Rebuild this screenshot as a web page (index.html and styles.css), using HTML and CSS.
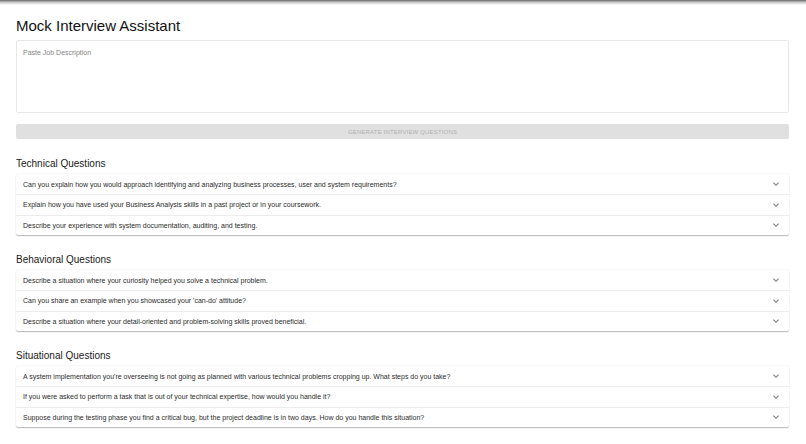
FILE: index.html
```html
<!DOCTYPE html>
<html lang="en">
<head>
<meta charset="utf-8">
<title>Mock Interview Assistant</title>
<link rel="stylesheet" href="styles.css">
</head>
<body>
<div class="topbar"></div>
<main class="page">
  <h1 class="title">Mock Interview Assistant</h1>
  <textarea class="jd" placeholder="Paste Job Description"></textarea>
  <button class="generate" disabled>Generate Interview Questions</button>

  <section class="qsection">
    <h2 class="qheading">Technical Questions</h2>
    <div class="accordion">
      <div class="row"><span class="qtext">Can you explain how you would approach identifying and analyzing business processes, user and system requirements?</span><svg class="chev" viewBox="0 0 24 24"><path d="M16.59 8.59 12 13.17 7.41 8.59 6 10l6 6 6-6z"/></svg></div>
      <div class="row"><span class="qtext">Explain how you have used your Business Analysis skills in a past project or in your coursework.</span><svg class="chev" viewBox="0 0 24 24"><path d="M16.59 8.59 12 13.17 7.41 8.59 6 10l6 6 6-6z"/></svg></div>
      <div class="row"><span class="qtext">Describe your experience with system documentation, auditing, and testing.</span><svg class="chev" viewBox="0 0 24 24"><path d="M16.59 8.59 12 13.17 7.41 8.59 6 10l6 6 6-6z"/></svg></div>
    </div>
  </section>

  <section class="qsection">
    <h2 class="qheading">Behavioral Questions</h2>
    <div class="accordion">
      <div class="row"><span class="qtext">Describe a situation where your curiosity helped you solve a technical problem.</span><svg class="chev" viewBox="0 0 24 24"><path d="M16.59 8.59 12 13.17 7.41 8.59 6 10l6 6 6-6z"/></svg></div>
      <div class="row"><span class="qtext">Can you share an example when you showcased your 'can-do' attitude?</span><svg class="chev" viewBox="0 0 24 24"><path d="M16.59 8.59 12 13.17 7.41 8.59 6 10l6 6 6-6z"/></svg></div>
      <div class="row"><span class="qtext">Describe a situation where your detail-oriented and problem-solving skills proved beneficial.</span><svg class="chev" viewBox="0 0 24 24"><path d="M16.59 8.59 12 13.17 7.41 8.59 6 10l6 6 6-6z"/></svg></div>
    </div>
  </section>

  <section class="qsection">
    <h2 class="qheading">Situational Questions</h2>
    <div class="accordion">
      <div class="row"><span class="qtext">A system implementation you're overseeing is not going as planned with various technical problems cropping up. What steps do you take?</span><svg class="chev" viewBox="0 0 24 24"><path d="M16.59 8.59 12 13.17 7.41 8.59 6 10l6 6 6-6z"/></svg></div>
      <div class="row"><span class="qtext">If you were asked to perform a task that is out of your technical expertise, how would you handle it?</span><svg class="chev" viewBox="0 0 24 24"><path d="M16.59 8.59 12 13.17 7.41 8.59 6 10l6 6 6-6z"/></svg></div>
      <div class="row"><span class="qtext">Suppose during the testing phase you find a critical bug, but the project deadline is in two days. How do you handle this situation?</span><svg class="chev" viewBox="0 0 24 24"><path d="M16.59 8.59 12 13.17 7.41 8.59 6 10l6 6 6-6z"/></svg></div>
    </div>
  </section>
</main>
</body>
</html>
```

FILE: styles.css
```css
* { box-sizing: border-box; }

html, body {
  margin: 0;
  padding: 0;
  background: #ffffff;
  font-family: "Liberation Sans", Arial, Helvetica, sans-serif;
  color: rgba(0, 0, 0, 0.87);
}

.topbar {
  height: 5px;
  background: linear-gradient(to bottom, rgba(0,0,0,0.6), rgba(0,0,0,0.22) 45%, rgba(0,0,0,0));
}

.page {
  padding: 0 17px 20px 16px;
  display: flex;
  flex-direction: column;
}

.title {
  margin: 11px 0 0 0;
  font-size: 15px;
  line-height: 20px;
  font-weight: 400;
  color: #111;
}

.jd {
  display: block;
  margin-top: 4px;
  width: 100%;
  height: 73px;
  border: 1px solid #e8e8e8;
  border-radius: 2px;
  padding: 6.5px 6px;
  font-family: "Liberation Sans", Arial, sans-serif;
  font-size: 7px;
  line-height: 9px;
  color: #333;
  resize: none;
  outline: none;
  background: #fff;
}

.jd::placeholder {
  color: #858585;
  opacity: 1;
}

.generate {
  margin-top: 11px;
  width: 100%;
  height: 15px;
  border: none;
  border-radius: 2px;
  background: #e0e0e0;
  color: #b2b2b2;
  font-family: "Liberation Sans", Arial, sans-serif;
  font-size: 6px;
  letter-spacing: 0.17px;
  text-transform: uppercase;
  padding: 0;
  display: flex;
  align-items: center;
  justify-content: center;
}

.qsection {
  margin-top: 17.5px;
}

.qheading {
  margin: 0 0 3.5px 0;
  font-size: 10px;
  line-height: 14px;
  font-weight: 400;
  color: #1a1a1a;
}

.accordion {
  background: #fff;
  border-radius: 2px;
  box-shadow: 0 1px 1px rgba(0,0,0,0.18), 0 0.5px 1.5px rgba(0,0,0,0.12);
}

.row {
  height: 20.5px;
  padding: 0 7px;
  display: flex;
  align-items: center;
  justify-content: space-between;
  border-top: 1px solid #ececec;
}

.row:first-child {
  height: 20px;
  border-top: none;
}

.qtext {
  font-size: 7px;
  line-height: 9px;
  color: #2b2b2b;
}

.chev {
  width: 12px;
  height: 12px;
  flex: none;
  fill: rgba(0,0,0,0.5);
}
```
